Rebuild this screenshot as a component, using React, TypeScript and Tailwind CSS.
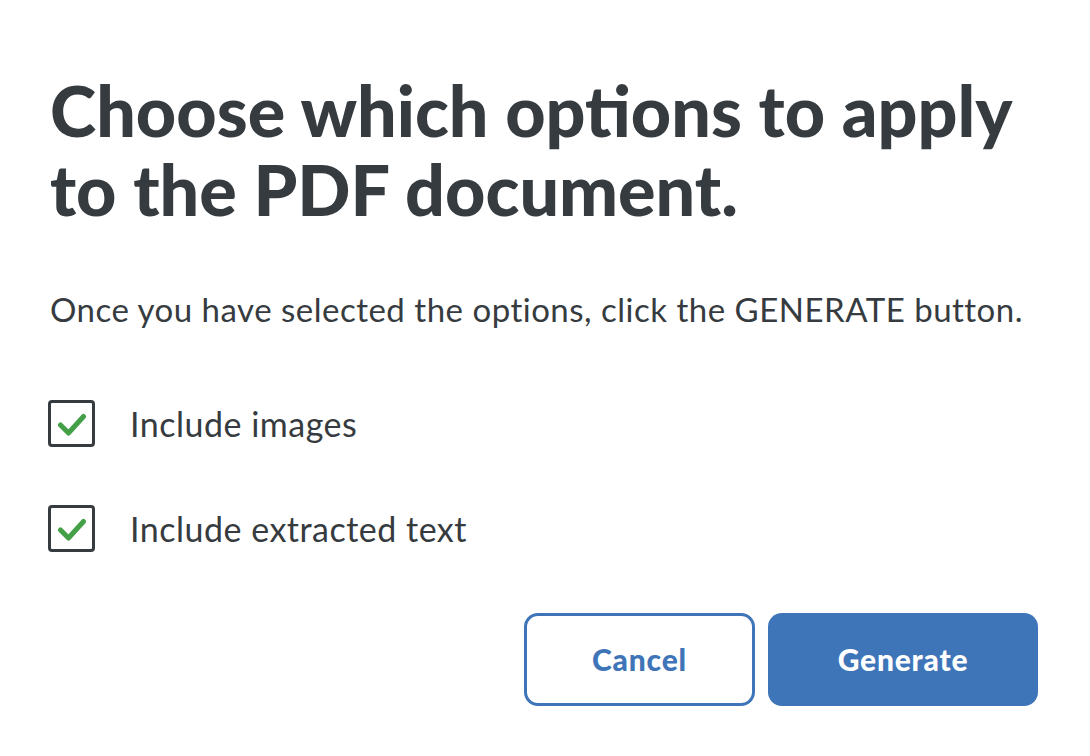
import React from "react";

function Check() {
  return (
    <div className="w-[47px] h-[47px] border-[3px] border-[#363b40] rounded-[4px] flex items-center justify-center shrink-0">
      <svg width="30" height="28" viewBox="0 0 30 28">
        <path d="M3.5 15 L11.5 23 L26.5 6.5" fill="none" stroke="#43a047" strokeWidth="5" strokeLinecap="round" strokeLinejoin="round" />
      </svg>
    </div>
  );
}

export default function App() {
  return (
    <div className="w-[1090px] h-[756px] bg-white text-[#363b40] pl-[50px] pr-[40px] pt-[71px]" style={{ fontFamily: "Lato, 'Open Sans', sans-serif" }}>
      <h1 className="text-[70px] leading-[79px] font-black whitespace-nowrap">
        Choose which options to apply
        <br />
        to the PDF document.
      </h1>
      <p className="mt-[60px] text-[33px] leading-[40px] tracking-[0.5px] whitespace-nowrap">
        Once you have selected the options, click the GENERATE button.
      </p>
      <div className="mt-[71px] flex flex-col gap-[58px] -ml-[2px]">
        <label className="h-[47px] flex items-center gap-[35px]">
          <Check />
          <span className="text-[34px] leading-[40px] tracking-[0.5px]">Include images</span>
        </label>
        <label className="h-[47px] flex items-center gap-[35px]">
          <Check />
          <span className="text-[34px] leading-[40px] tracking-[0.5px]">Include extracted text</span>
        </label>
      </div>
      <div className="mt-[61px] flex justify-end gap-[13px] pr-[12px]">
        <button className="w-[231px] h-[93px] rounded-[14px] border-[3px] border-[#3f75b8] text-[#3f75b8] bg-white text-[30px] tracking-[0.8px] font-black">
          Cancel
        </button>
        <button className="w-[270px] h-[93px] rounded-[14px] bg-[#3e75b8] text-white text-[30px] tracking-[0.8px] font-black">
          Generate
        </button>
      </div>
    </div>
  );
}
